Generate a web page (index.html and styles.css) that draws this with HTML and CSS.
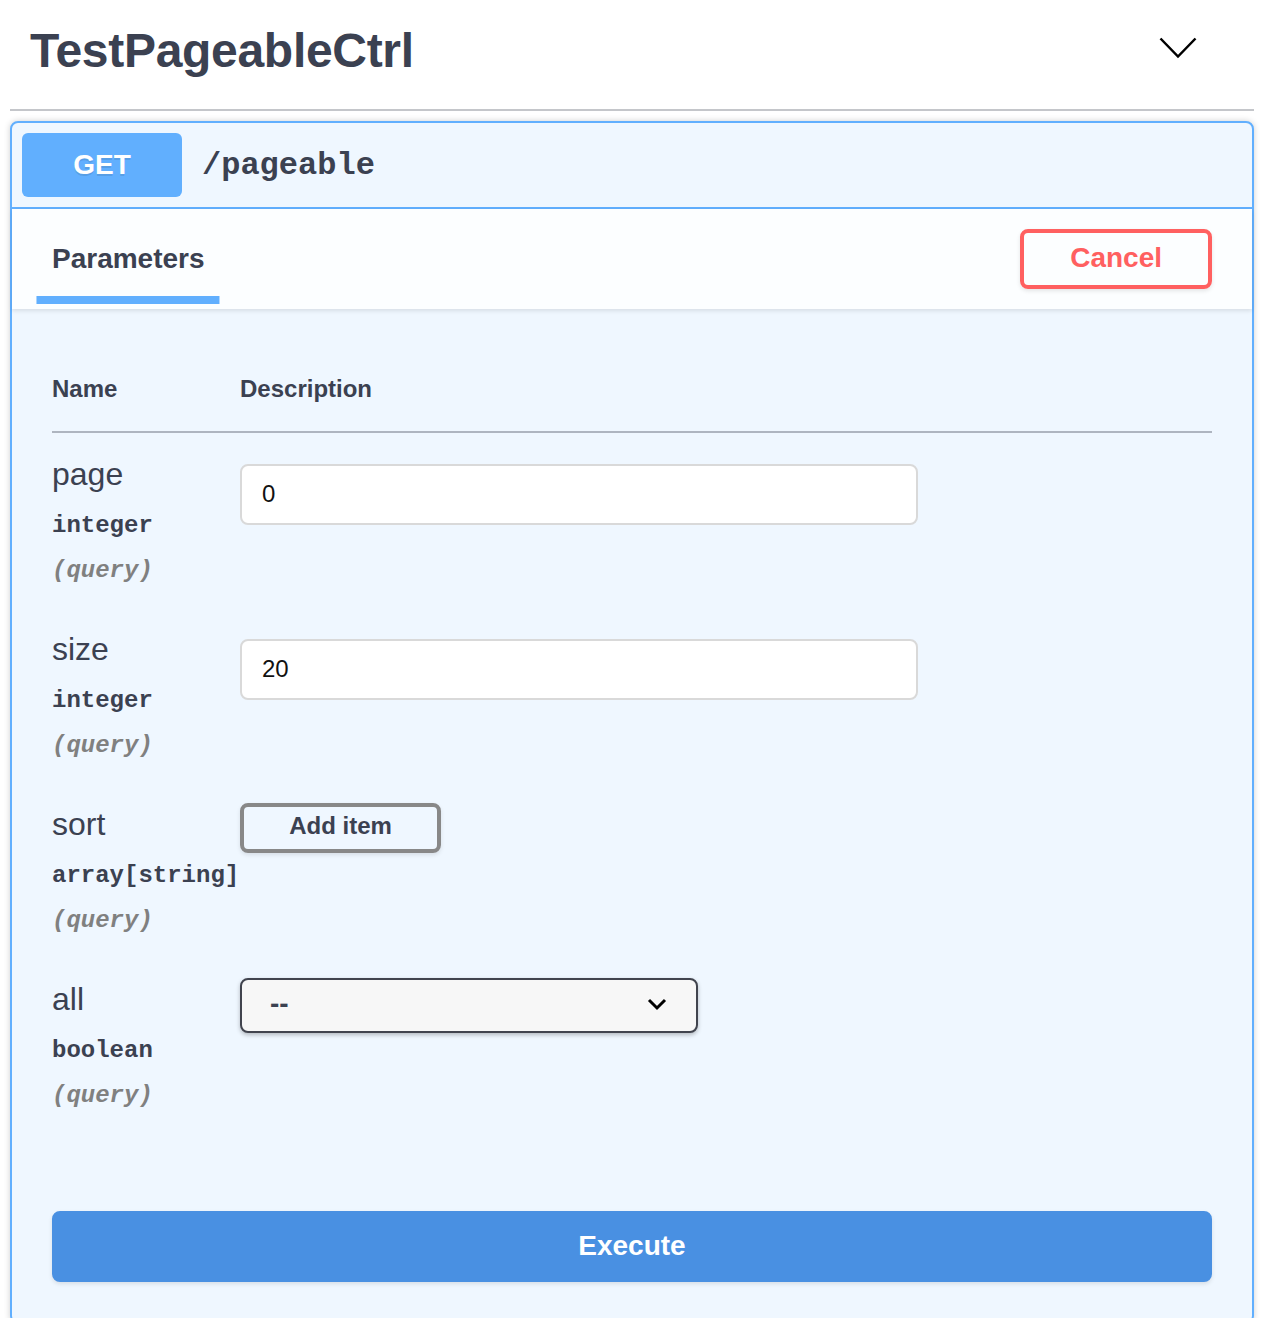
FILE: index.html
```html
<!DOCTYPE html>
<html lang="en">
<head>
<meta charset="utf-8">
<title>TestPageableCtrl</title>
<link rel="stylesheet" href="styles.css">
</head>
<body>
<div class="tag-section">
  <h3 class="tag-title">
    <span class="tag-name">TestPageableCtrl</span>
    <svg class="tag-arrow" width="38" height="22" viewBox="0 0 38 22" aria-hidden="true"><polyline points="1.5,1.5 19,19.5 36.5,1.5" fill="none" stroke="#000" stroke-width="2.5"/></svg>
  </h3>
  <div class="opblock">
    <div class="opblock-summary">
      <span class="method">GET</span>
      <span class="path">/pageable</span>
    </div>
    <div class="section-header">
      <div class="tab"><span class="tab-label">Parameters</span></div>
      <button class="btn btn-cancel">Cancel</button>
    </div>
    <div class="params">
      <table class="param-table">
        <thead>
          <tr><th class="col-name">Name</th><th class="col-desc">Description</th></tr>
        </thead>
        <tbody>
          <tr>
            <td class="col-name"><div class="p-name">page</div><div class="p-type">integer</div><div class="p-in">(query)</div></td>
            <td class="col-desc"><input class="p-input" type="text" value="0"></td>
          </tr>
          <tr>
            <td class="col-name"><div class="p-name">size</div><div class="p-type">integer</div><div class="p-in">(query)</div></td>
            <td class="col-desc"><input class="p-input" type="text" value="20"></td>
          </tr>
          <tr>
            <td class="col-name"><div class="p-name">sort</div><div class="p-type">array[string]</div><div class="p-in">(query)</div></td>
            <td class="col-desc"><button class="btn btn-add">Add item</button></td>
          </tr>
          <tr>
            <td class="col-name"><div class="p-name">all</div><div class="p-type">boolean</div><div class="p-in">(query)</div></td>
            <td class="col-desc">
              <div class="select-wrap">
                <select class="p-select"><option>--</option><option>true</option><option>false</option></select>
                <svg class="select-arrow" width="20" height="14" viewBox="0 0 20 14" aria-hidden="true"><polyline points="2,3 10,11 18,3" fill="none" stroke="#000" stroke-width="3"/></svg>
              </div>
            </td>
          </tr>
        </tbody>
      </table>
    </div>
    <div class="btn-group">
      <button class="btn btn-execute">Execute</button>
    </div>
  </div>
</div>
</body>
</html>
```
FILE: styles.css
```css
html, body {
  margin: 0;
  padding: 0;
  background: #fff;
}

body {
  font-family: "Liberation Sans", Arial, sans-serif;
  color: #3b4151;
}

.tag-section {
  margin: 0 12px 0 10px;
}

.tag-title {
  box-sizing: border-box;
  height: 111px;
  margin: 0 0 10px;
  padding: 27px 57px 0 20px;
  display: flex;
  justify-content: space-between;
  align-items: flex-start;
  border-bottom: 2px solid rgba(59, 65, 81, 0.3);
}

.tag-name {
  font-size: 48px;
  line-height: 48px;
  font-weight: 700;
  letter-spacing: -0.3px;
  color: #3b4151;
}

.tag-arrow {
  margin-top: 10px;
  display: block;
}

.opblock {
  border: 2px solid #61affe;
  border-radius: 8px;
  background: #eff7ff;
  box-shadow: 0 0 6px rgba(0, 0, 0, 0.19);
}

.opblock-summary {
  display: flex;
  align-items: center;
  padding: 10px;
  border-bottom: 2px solid #61affe;
}

.method {
  display: flex;
  align-items: center;
  justify-content: center;
  width: 160px;
  height: 64px;
  border-radius: 6px;
  background: #61affe;
  color: #fff;
  font-size: 28px;
  font-weight: 700;
  text-shadow: 0 2px 0 rgba(0, 0, 0, 0.1);
}

.path {
  padding: 0 20px;
  font-family: "Liberation Mono", "Courier New", monospace;
  font-size: 32px;
  font-weight: 700;
  color: #3b4151;
}

.section-header {
  box-sizing: border-box;
  min-height: 100px;
  padding: 16px 40px;
  display: flex;
  align-items: center;
  justify-content: space-between;
  background: rgba(255, 255, 255, 0.8);
  box-shadow: 0 2px 4px rgba(0, 0, 0, 0.1);
}

.tab-label {
  position: relative;
  display: inline-block;
  font-size: 28px;
  line-height: 32px;
  font-weight: 700;
  color: #3b4151;
}

.tab-label::after {
  content: "";
  position: absolute;
  left: 50%;
  bottom: -29px;
  width: 120%;
  height: 8px;
  transform: translateX(-50%);
  background: #61affe;
}

.btn {
  font-family: "Liberation Sans", Arial, sans-serif;
  font-weight: 700;
  border-radius: 8px;
  background: transparent;
  box-shadow: 0 2px 4px rgba(0, 0, 0, 0.1);
  cursor: pointer;
}

.btn-cancel {
  padding: 9px 46px 11px;
  font-size: 28px;
  line-height: 32px;
  border: 4px solid #ff6060;
  color: #ff6060;
}

.params {
  padding: 40px 40px 40px;
}

.param-table {
  width: 100%;
  border-collapse: collapse;
}

.param-table th {
  text-align: left;
  font-size: 24px;
  line-height: 32px;
  font-weight: 700;
  padding: 24px 0 26px;
  border-bottom: 2px solid rgba(59, 65, 81, 0.2);
  color: #3b4151;
}

.param-table th.col-name,
.param-table td.col-name {
  width: 188px;
}

.param-table td {
  vertical-align: top;
  padding: 20px 0 23px;
}

.p-name {
  font-size: 32px;
  line-height: 40px;
  padding-top: 1px;
  margin-bottom: -1px;
  color: #3b4151;
}

.p-type {
  padding-top: 19px;
  font-family: "Liberation Mono", "Courier New", monospace;
  font-size: 24px;
  line-height: 28px;
  font-weight: 700;
  color: #3b4151;
  white-space: nowrap;
}

.p-in {
  padding-top: 17px;
  font-family: "Liberation Mono", "Courier New", monospace;
  font-size: 24px;
  line-height: 28px;
  font-weight: 700;
  font-style: italic;
  color: #808080;
}

.p-input {
  display: block;
  box-sizing: border-box;
  width: 678px;
  height: 61px;
  margin: 11px 0 0;
  padding: 0 20px 2px;
  border: 2px solid #d9d9d9;
  border-radius: 8px;
  background: #fff;
  font-family: "Liberation Sans", Arial, sans-serif;
  font-size: 24px;
  color: #111;
  outline: none;
}

.btn-add {
  display: block;
  width: 201px;
  padding: 5px 0 9px;
  font-size: 24px;
  line-height: 28px;
  border: 4px solid #888;
  color: #3b4151;
}

.select-wrap {
  position: relative;
  display: inline-block;
}

.p-select {
  display: block;
  box-sizing: border-box;
  width: 458px;
  height: 55px;
  padding: 0 80px 4px 28px;
  -webkit-appearance: none;
  appearance: none;
  border: 2px solid #41444e;
  border-radius: 8px;
  background: #f7f7f7;
  box-shadow: 0 2px 4px rgba(0, 0, 0, 0.25);
  font-family: "Liberation Sans", Arial, sans-serif;
  font-size: 28px;
  font-weight: 700;
  color: #3b4151;
  outline: none;
}

.select-arrow {
  position: absolute;
  right: 31px;
  top: 19px;
  pointer-events: none;
}

.btn-group {
  padding: 38px 40px 40px;
}

.btn-execute {
  display: block;
  width: 100%;
  padding: 17px 18px 19px;
  font-size: 28px;
  line-height: 31px;
  border: 2px solid #4990e2;
  background: #4990e2;
  color: #fff;
}
```
